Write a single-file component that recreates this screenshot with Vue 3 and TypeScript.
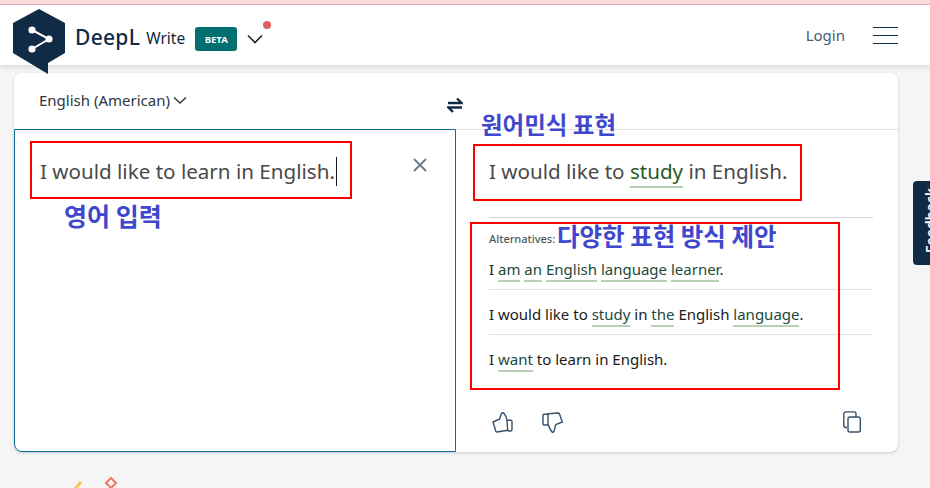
<template>
  <div class="page">
    <div class="top-strip"></div>

    <header class="site-header">
      <div class="brand">
        <svg class="logo" viewBox="0 0 52 65" width="52" height="65">
          <path d="M26 0 L52 14 V44 L35 54 V65 L0 44 V14 Z" fill="#0f2b46" />
          <path d="M19 21 L36 30 L19 40" fill="none" stroke="#fff" stroke-width="2" />
          <circle cx="19" cy="21" r="3.600" fill="#fff" />
          <circle cx="36" cy="30" r="3.600" fill="#fff" />
          <circle cx="19" cy="40" r="3.600" fill="#fff" />
        </svg>
        <span class="brand-name">DeepL</span>
        <span class="brand-product">Write</span>
        <span class="beta">BETA</span>
        <span class="menu-caret">
          <svg viewBox="0 0 16 10" width="16" height="10">
            <path d="M1 1.500 L8 8.500 L15 1.500" fill="none" stroke="#1a2530" stroke-width="1.600" />
          </svg>
          <i class="red-dot"></i>
        </span>
      </div>
      <div class="header-right">
        <span class="login">Login</span>
        <div class="burger"><i></i><i></i><i></i></div>
      </div>
    </header>

    <main class="content">
      <section class="card">
        <div class="card-head">
          <div class="lang">
            English (American)
            <svg viewBox="0 0 14 9" width="14" height="9">
              <path d="M1 1.500 L7 7 L13 1.500" fill="none" stroke="#2c3742" stroke-width="1.500" />
            </svg>
          </div>
          <div class="swap">
            <svg viewBox="0 0 16 16" width="16" height="16">
              <path d="M1 6 H14.500 L10 1.500 M15 10.500 H1.500 L6 15" fill="none" stroke="#0f2b46" stroke-width="2.300" />
            </svg>
          </div>
          <div class="head-fill"></div>
        </div>

        <div class="panels">
          <div class="source">
            <p class="source-text">I would like to learn in English.<span class="caret"></span></p>
            <svg class="clear" viewBox="0 0 14 14" width="14" height="14">
              <path d="M1 1 L13 13 M13 1 L1 13" stroke="#6c7a87" stroke-width="1.800" fill="none" />
            </svg>
          </div>

          <div class="target">
            <p class="target-text">
              I would like to <span class="changed">study</span> in English.
            </p>
            <div class="alternatives">
              <div class="alt-label">Alternatives:</div>
              <div v-for="(alt, i) in alternatives" :key="i" class="alt-row">
                <template v-for="(part, j) in alt" :key="j">
                  <span :class="{ mark: part.mark }">{{ part.text }}</span>
                </template>
              </div>
            </div>
            <div class="actions">
              <div class="thumbs">
                <svg viewBox="0 0 21 21" width="21" height="21">
                  <path d="M1 10 L7.700 7 L9.300 1.700 C10 0.800 11 0.700 11.700 1 C13.500 3 14.500 5.500 15 8.300 L15.700 18.300 L5 20 C4.400 20 4 19.700 3.800 19.200 Z" fill="none" stroke="#36506b" stroke-width="1.400" stroke-linejoin="round" />
                  <path d="M15 8.300 H19 C19.600 8.300 20 9 20 10 V17 C20 18.300 19.600 19 19 19 H15.700" fill="none" stroke="#36506b" stroke-width="1.400" />
                </svg>
                <svg viewBox="0 0 21 21" width="21" height="21">
                  <path d="M6 1.700 L16 1 C16.700 1 17.200 1.400 17.500 2 L20.300 10 L13.700 12.700 L12 19.300 C11.700 20.200 10.800 20.500 10.300 20.300 C8.500 18 7 15.500 6 12.300 Z" fill="none" stroke="#36506b" stroke-width="1.400" stroke-linejoin="round" />
                  <path d="M6 2.300 H2 C1.400 2.300 1 3 1 3.700 V11.700 C1 12.500 1.400 13 2 13 H6" fill="none" stroke="#36506b" stroke-width="1.400" />
                </svg>
              </div>
              <svg class="copy" viewBox="0 0 18 22" width="18" height="22">
                <path d="M4 16.500 H3 C1.600 16.500 0.800 15.700 0.800 14.500 V3 C0.800 1.700 1.600 0.900 3 0.900 H11 C12.300 0.900 13 1.700 13 3 V6" fill="none" stroke="#36506b" stroke-width="1.400" />
                <rect x="5" y="6" width="12.300" height="15" rx="2" fill="#fff" stroke="#36506b" stroke-width="1.400" />
              </svg>
            </div>
          </div>
        </div>
      </section>
      <div class="feedback"><span>Feedback</span></div>
    </main>

    <svg class="confetti" viewBox="0 0 50 14" width="50" height="14">
      <path d="M5 13 L11 6" stroke="#f8c64c" stroke-width="3" fill="none" />
      <path d="M41 2 L46 7 L41 12 L36 7 Z" stroke="#f2785c" stroke-width="2" fill="none" />
    </svg>

    <!-- annotations laid over the screenshot -->
    <div class="box box-source"></div>
    <div class="box box-target"></div>
    <div class="box box-alts"></div>
    <span class="note note-source">영어 입력</span>
    <span class="note note-target">원어민식 표현</span>
    <span class="note note-alts">다양한 표현 방식 제안</span>
  </div>
</template>

<script setup lang="ts">
interface Part {
  text: string
  mark?: boolean
}

const alternatives: Part[][] = [
  [
    { text: 'I ' },
    { text: 'am', mark: true },
    { text: ' ' },
    { text: 'an', mark: true },
    { text: ' ' },
    { text: 'English', mark: true },
    { text: ' ' },
    { text: 'language', mark: true },
    { text: ' ' },
    { text: 'learner', mark: true },
    { text: '.' },
  ],
  [
    { text: 'I would like to ' },
    { text: 'study', mark: true },
    { text: ' in ' },
    { text: 'the', mark: true },
    { text: ' English ' },
    { text: 'language', mark: true },
    { text: '.' },
  ],
  [
    { text: 'I ' },
    { text: 'want', mark: true },
    { text: ' to learn in English.' },
  ],
]
</script>

<style>
html,
body {
  margin: 0;
  overflow: hidden;
}
</style>

<style scoped>
.page {
  position: relative;
  width: 930px;
  height: 488px;
  overflow: hidden;
  background: #f5f5f6;
  font-family: "Noto Sans", "Open Sans", sans-serif;
}

.top-strip {
  height: 4px;
  background: #fbdde0;
  border-bottom: 1px solid #d8b9bd;
}

.site-header {
  height: 60px;
  display: flex;
  align-items: center;
  justify-content: space-between;
  padding: 0 32px 0 13px;
  background: #fff;
  box-shadow: 0 2px 6px rgba(15, 43, 70, 0.14);
  position: relative;
}

.brand {
  display: flex;
  align-items: center;
  position: relative;
  height: 30px;
  margin-top: 4px;
}

.logo {
  position: absolute;
  left: 0;
  top: -13px;
  z-index: 3;
}

.brand-name {
  margin-left: 62px;
  font-size: 21px;
  font-weight: 500;
  color: #0f2b46;
  letter-spacing: 0.3px;
}

.brand-product {
  margin-left: 6px;
  font-size: 15.500px;
  color: #0f2b46;
  padding-top: 2px;
}

.beta {
  margin-left: 10px;
  width: 42px;
  height: 24px;
  line-height: 25px;
  text-align: center;
  border-radius: 3px;
  background: #006f6f;
  color: #fff;
  font-size: 9.500px;
  font-weight: 700;
  margin-top: 3px;
}

.menu-caret {
  margin-left: 10px;
  position: relative;
  display: flex;
  margin-top: 3px;
}

.red-dot {
  position: absolute;
  left: 16px;
  top: -13px;
  width: 8px;
  height: 8px;
  border-radius: 50%;
  background: #e0605e;
}

.header-right {
  display: flex;
  align-items: center;
  gap: 28px;
}

.login {
  font-size: 15px;
  color: #4a5d70;
}

.burger {
  width: 25px;
  display: flex;
  flex-direction: column;
  gap: 7px;
}

.burger i {
  display: block;
  height: 1px;
  background: #0f2b46;
}

.content {
  position: relative;
  padding: 8px 32px 0 14px;
}

.card {
  height: 379px;
  box-sizing: border-box;
  background: #fff;
  border-radius: 8px;
  box-shadow: 0 1px 3px rgba(15, 43, 70, 0.22);
  display: flex;
  flex-direction: column;
}

.card-head {
  height: 56px;
  display: flex;
  align-items: center;
  flex: none;
}

.lang {
  width: 416px;
  padding-left: 25px;
  box-sizing: border-box;
  font-size: 15px;
  color: #2c3742;
  display: flex;
  align-items: center;
  gap: 3px;
  padding-bottom: 2px;
}

.swap {
  margin-left: 2px;
  display: flex;
  padding-top: 7px;
  padding-left: 15px;
  width: 16px;
}

.head-fill {
  flex: 1;
}

.panels {
  flex: 1;
  display: flex;
  min-height: 0;
}

.source {
  width: 442px;
  box-sizing: border-box;
  position: relative;
  background: #fff;
  border: 1px solid #0f6a94;
  border-radius: 0 0 0 8px;
  padding: 25px 0 0 25px;
}

.source-text,
.target-text {
  margin: 0;
  font-size: 20.600px;
  line-height: 32px;
  color: #4a4a4a;
}

.caret {
  display: inline-block;
  width: 1px;
  height: 29px;
  background: #1a1a1a;
  vertical-align: -7px;
  margin-left: 1px;
}

.clear {
  position: absolute;
  top: 28px;
  right: 28px;
}

.target {
  flex: 1;
  min-width: 0;
  display: flex;
  flex-direction: column;
  border-top: 1px solid #dde3ec;
  padding: 25px 25px 0 33px;
}

.changed {
  color: #2c5a27;
  border-bottom: 2px solid #b5cfb2;
  padding-bottom: 1px;
}

.alternatives {
  margin-top: 30px;
  border-top: 1px solid #d0d3da;
}

.alt-label {
  font-size: 11px;
  font-weight: 500;
  color: #4f5860;
  margin-top: 13px;
  line-height: 16px;
}

.alt-row {
  font-size: 15px;
  line-height: 20px;
  color: #1a1a1a;
  white-space: pre;
  padding: 14px 0 10px;
  border-bottom: 1px solid #e2e4ea;
}

.alt-label + .alt-row {
  padding-top: 12px;
}

.alt-row:last-child {
  border-bottom: none;
}

.mark {
  color: #1b4a3c;
  border-bottom: 2px solid #b9d0b6;
  padding-bottom: 1px;
}

.actions {
  margin-top: auto;
  height: 40px;
  display: flex;
  justify-content: space-between;
  align-items: flex-start;
  padding: 0 12px 0 3px;
}

.thumbs {
  display: flex;
  gap: 29px;
}

.copy {
  margin-top: -1px;
}

.feedback {
  position: absolute;
  right: -1px;
  top: 116px;
  width: 18px;
  height: 84px;
  background: #0f2b46;
  border-radius: 4px 0 0 4px;
  overflow: hidden;
}

.feedback span {
  position: absolute;
  left: 11px;
  top: 72px;
  transform: rotate(-90deg);
  transform-origin: 0 0;
  color: #fff;
  font-size: 14px;
  font-weight: 600;
  line-height: 14px;
  white-space: nowrap;
}

.confetti {
  position: absolute;
  left: 70px;
  top: 476px;
}

.box {
  position: absolute;
  box-sizing: border-box;
  border: 2px solid #f00;
  z-index: 4;
}

.box-source {
  left: 30px;
  top: 141px;
  width: 322px;
  height: 58px;
}

.box-target {
  left: 473px;
  top: 144px;
  width: 329px;
  height: 57px;
}

.box-alts {
  left: 470px;
  top: 222px;
  width: 370px;
  height: 168px;
}

.note {
  position: absolute;
  z-index: 5;
  font-family: "Noto Sans CJK KR", sans-serif;
  font-weight: 700;
  line-height: 28px;
  color: #3f48cc;
  white-space: nowrap;
}

.note-source {
  left: 64px;
  top: 201px;
  font-size: 25px;
}

.note-target {
  left: 481px;
  top: 110px;
  font-size: 23.500px;
}

.note-alts {
  left: 557px;
  top: 222px;
  font-size: 24.500px;
}
</style>
